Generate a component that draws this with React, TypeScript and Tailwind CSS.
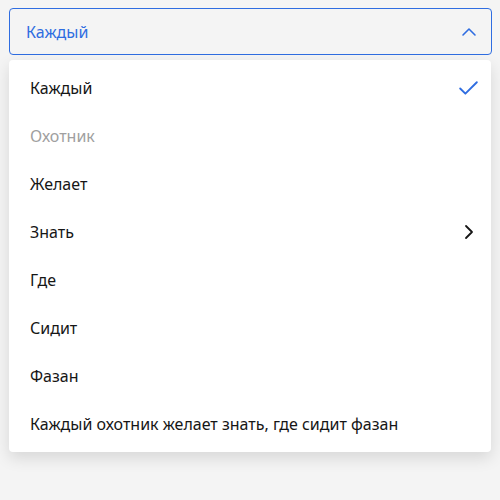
import { Check, ChevronRight, ChevronUp } from "lucide-react";

const items = [
  { label: "Каждый", selected: true },
  { label: "Охотник", disabled: true },
  { label: "Желает" },
  { label: "Знать", submenu: true },
  { label: "Где" },
  { label: "Сидит" },
  { label: "Фазан" },
  { label: "Каждый охотник желает знать, где сидит фазан" },
];

export default function App() {
  return (
    <div
      className="w-[500px] h-[500px] bg-[#f4f4f4] px-[9px] pt-[8px]"
      style={{ fontFamily: '"Noto Sans", sans-serif' }}
    >
      <button className="w-[483px] h-[47px] flex items-center justify-between rounded-[4px] border border-[#2f6de1] bg-[#f4f4f4] pl-[16px] pr-[10px] text-[16px] text-[#2f6de1]">
        <span>Каждый</span>
        <ChevronUp size={24} strokeWidth={1.6} />
      </button>
      <ul className="mt-[5px] w-[482px] rounded-[4px] bg-white py-[4px] shadow-[0_6px_16px_rgba(0,0,0,0.12)]">
        {items.map((it) => (
          <li
            key={it.label}
            className={`h-[48px] flex items-center justify-between pl-[21px] pr-[10px] text-[16px] ${
              it.disabled ? "text-[#a0a0a0]" : "text-[#161616]"
            }`}
          >
            <span>{it.label}</span>
            {it.selected && <Check size={25} strokeWidth={1.8} className="text-[#2f6de1]" />}
            {it.submenu && <ChevronRight size={24} strokeWidth={1.8} />}
          </li>
        ))}
      </ul>
    </div>
  );
}
